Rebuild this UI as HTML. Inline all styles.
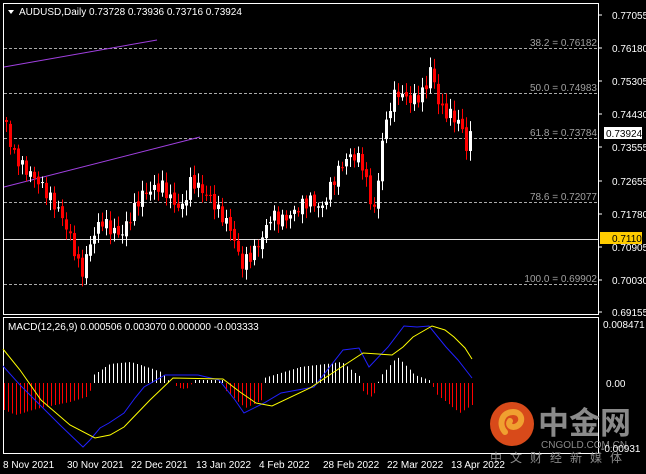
<!DOCTYPE html>
<html><head><meta charset="utf-8"><style>
html,body{margin:0;padding:0;background:#000;width:646px;height:474px;overflow:hidden}
svg text{font-family:"Liberation Sans",sans-serif}
</style></head><body>
<svg id="s" width="646" height="474" xmlns="http://www.w3.org/2000/svg">
<rect width="646" height="474" fill="#000"/>
<rect x="3.5" y="3.5" width="595" height="311" fill="none" stroke="#fff" stroke-width="1"/>
<rect x="3.5" y="317.5" width="595" height="136" fill="none" stroke="#fff" stroke-width="1"/>
<g stroke="#aaa" stroke-dasharray="3,2" stroke-width="1">
<line x1="4" y1="48.5" x2="598" y2="48.5"/>
<line x1="4" y1="93.5" x2="598" y2="93.5"/>
<line x1="4" y1="138.5" x2="598" y2="138.5"/>
<line x1="4" y1="202.5" x2="598" y2="202.5"/>
<line x1="4" y1="284.5" x2="598" y2="284.5"/>
</g>
<line x1="4" y1="239.5" x2="598" y2="239.5" stroke="#ddd" stroke-width="1"/>
<g fill="#a0a0a0" font-size="10" text-anchor="end">
<text x="597" y="46">38.2 = 0.76182</text>
<text x="597" y="91">50.0 = 0.74983</text>
<text x="597" y="136">61.8 = 0.73784</text>
<text x="597" y="200">78.6 = 0.72077</text>
<text x="597" y="282">100.0 = 0.69902</text>
</g>
<line x1="4" y1="67" x2="157" y2="40" stroke="#a040e0" stroke-width="1"/>
<line x1="4" y1="187" x2="200" y2="137" stroke="#a040e0" stroke-width="1"/>
<g id="cand"></g>
<g id="hist"></g>
<polyline fill="none" stroke="#2020ff" stroke-width="1" points="3,366 20,385 40,405 60,425 83,447 90,440 100,428 109,423 124,413 135,398 144,387 165,375 198,375 219,380 235,400 244,413 264,403 281,393 314,387 343,350 359,348 369,367 388,347 404,326 417,327 429,326 446,347 458,360 472,378"/>
<polyline fill="none" stroke="#ffff00" stroke-width="1" points="3,349 20,370 41,400 70,425 95,438 110,435 124,427 150,400 173,378 223,379 240,392 256,403 272,406 310,388 340,368 363,353 392,355 403,347 413,337 432,326 445,330 454,337 465,348 472,359"/>
<g fill="#fff" font-size="10">
<text x="612" y="19">0.77055</text>
<text x="612" y="52">0.76180</text>
<text x="612" y="85">0.75305</text>
<text x="612" y="118">0.74430</text>
<text x="612" y="151">0.73555</text>
<text x="612" y="185">0.72655</text>
<text x="612" y="218">0.71780</text>
<text x="612" y="251">0.70905</text>
<text x="612" y="284">0.70030</text>
<text x="612" y="316">0.69155</text>
<text x="603" y="328">0.008471</text>
<text x="606" y="387">0.00</text>
</g>
<g stroke="#fff"><line x1="598" y1="15" x2="602" y2="15"/><line x1="598" y1="48" x2="602" y2="48"/><line x1="598" y1="81" x2="602" y2="81"/><line x1="598" y1="114" x2="602" y2="114"/><line x1="598" y1="147" x2="602" y2="147"/><line x1="598" y1="181" x2="602" y2="181"/><line x1="598" y1="214" x2="602" y2="214"/><line x1="598" y1="247" x2="602" y2="247"/><line x1="598" y1="280" x2="602" y2="280"/><line x1="598" y1="312" x2="602" y2="312"/></g>
<rect x="604" y="127" width="38" height="12" fill="#fff"/>
<text x="606" y="137" fill="#000" font-size="10">0.73924</text>
<rect x="600" y="232" width="42" height="12" fill="#ffcc00"/>
<text x="612" y="242" fill="#000" font-size="10">0.71100</text>
<polygon points="8,10 14,10 11,14" fill="#fff"/>
<text x="19" y="15" fill="#fff" font-size="10">AUDUSD,Daily  0.73728 0.73936 0.73716 0.73924</text>
<text x="8" y="330" fill="#fff" font-size="10">MACD(12,26,9) 0.000506 0.003070 0.000000 -0.003333</text>
<circle cx="512" cy="424" r="22" fill="#d84a1a"/>
<path d="M505 432 C498 424 502 412 513 412 C522 412 524 422 517 426 C512 429 507 425 510 421" fill="none" stroke="#f0a030" stroke-width="6" stroke-linecap="round"/>
<text x="538" y="434" fill="#8a8a8a" font-size="31" font-weight="bold" style="font-family:'Liberation Sans','Noto Sans CJK SC',sans-serif">中金网</text>
<text x="541" y="448" fill="#8a8a8a" font-size="10">CNGOLD.COM.CN</text>
<text x="601" y="452" fill="#fff" font-size="10">-0.00931</text>
<text x="490" y="462" fill="#8a8a8a" font-size="12" letter-spacing="8" style="font-family:'Liberation Sans','Noto Sans CJK SC',sans-serif">中文财经新媒体</text>
<g fill="#fff" font-size="10">
<text x="3" y="468">8 Nov 2021</text>
<text x="67" y="468">30 Nov 2021</text>
<text x="131" y="468">22 Dec 2021</text>
<text x="196" y="468">13 Jan 2022</text>
<text x="259" y="468">4 Feb 2022</text>
<text x="323" y="468">28 Feb 2022</text>
<text x="387" y="468">22 Mar 2022</text>
<text x="451" y="468">13 Apr 2022</text>
</g>
</svg>
<script>
(function(){
var NS="http://www.w3.org/2000/svg";
function interp(pts,x){for(var i=0;i<pts.length-1;i++){var a=pts[i],b=pts[i+1];if(x>=a[0]&&x<=b[0]){return a[1]+(b[1]-a[1])*(x-a[0])/(b[0]-a[0]);}}return pts[pts.length-1][1];}
var path=[[5,122],[10,150],[20,165],[30,175],[40,185],[50,200],[60,215],[70,240],[80,275],[90,240],[100,220],[110,230],[120,235],[130,215],[140,195],[150,190],[160,185],[170,200],[180,210],[190,180],[200,190],[210,200],[220,215],[230,230],[240,265],[250,255],[260,240],[270,215],[280,220],[290,215],[300,205],[310,200],[320,210],[330,185],[340,165],[350,155],[360,160],[370,205],[375,210],[380,140],[385,125],[390,100],[395,92],[400,95],[410,100],[420,95],[425,85],[430,65],[435,95],[440,110],[450,115],[460,125],[465,148],[470,133]];
var g=document.getElementById('cand');
var prev=120;
for(var i=0;i<117;i++){
 var x=5+i*4; if(x>471)break;
 var c=interp(path,x)+Math.sin(i*2.7)*6;
 var o=prev+Math.sin(i*1.3)*2;
 var top=Math.min(o,c),bot=Math.max(o,c);
 if(bot-top<1){bot=top+1;}
 var hi=top-3-Math.abs(Math.sin(i*3.1))*7, lo=bot+3+Math.abs(Math.cos(i*2.3))*7;
 var col=(c<o)?'#fff':'#f00';
 var l=document.createElementNS(NS,'line');l.setAttribute('x1',x+1.5);l.setAttribute('x2',x+1.5);l.setAttribute('y1',hi);l.setAttribute('y2',lo);l.setAttribute('stroke',col);g.appendChild(l);
 var r=document.createElementNS(NS,'rect');r.setAttribute('x',x);r.setAttribute('y',top);r.setAttribute('width',3);r.setAttribute('height',bot-top);r.setAttribute('fill',col);g.appendChild(r);
 prev=c;
}
var hp=[[4,410],[15,415],[40,408],[70,402],[89,396],[91,383],[93,375],[110,364],[130,362],[150,368],[161,372],[170,383],[181,389],[189,388],[192,383],[194,380],[223,380],[225,390],[245,408],[262,400],[264,378],[300,367],[342,362],[355,373],[359,376],[361,383],[363,392],[370,397],[376,392],[378,383],[380,377],[397,357],[415,375],[429,380],[431,383],[437,395],[460,413],[472,405]];
var h=document.getElementById('hist');
for(var x=4;x<=472;x+=3.9){
 var y=interp(hp,x);
 if(Math.abs(y-383)<1)continue;
 var l=document.createElementNS(NS,'line');l.setAttribute('x1',Math.round(x)+0.5);l.setAttribute('x2',Math.round(x)+0.5);l.setAttribute('y1',383);l.setAttribute('y2',y);l.setAttribute('stroke',y>383?'#f00':'#fff');h.appendChild(l);
}
})();
</script>
</body></html>
